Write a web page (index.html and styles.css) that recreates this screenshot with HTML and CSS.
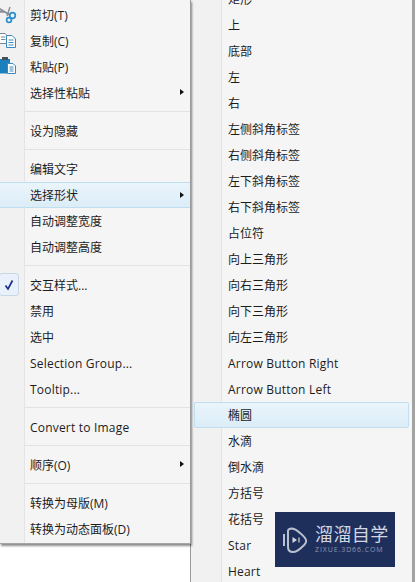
FILE: index.html
```html
<!DOCTYPE html>
<html lang="zh-CN">

<head>
  <meta charset="UTF-8">
  <title>选择形状</title>
  <link rel="stylesheet" href="styles.css">
</head>

<body>
  <div class="desk">
    <ul class="menu menu-main">
      <li class="item">
        <svg class="icon" viewBox="0 0 24 26" width="24" height="26">
          <path d="M-1 6.500 L10 13 M-1 10 L4 9.500" fill="none" stroke="#8a8f96" stroke-width="1.800"/>
          <path d="M10 5 L7 14" fill="none" stroke="#8a8f96" stroke-width="1.500"/>
          <circle cx="12.500" cy="13.500" r="2.800" fill="none" stroke="#2b8fd0" stroke-width="1.700"/>
          <circle cx="9" cy="18" r="2.400" fill="none" stroke="#2b8fd0" stroke-width="1.700"/>
        </svg>
        <span>剪切(T)</span>
      </li>
      <li class="item">
        <svg class="icon" viewBox="0 0 24 26" width="24" height="26">
          <path d="M-1 5.500 H5 L7.500 8 V15.500 H-1 Z" fill="#fff" stroke="#7d8790"/>
          <path d="M1 9 H5.500 M1 11.500 H5.500" stroke="#7d8790"/>
          <path d="M6.500 7.500 H12 L15.500 11 V19.500 H6.500 Z" fill="#fff" stroke="#3d89bd"/>
          <path d="M8.500 12 H13.500 M8.500 14.500 H13.500 M8.500 17 H13.500" stroke="#3d89bd"/>
        </svg>
        <span>复制(C)</span>
      </li>
      <li class="item">
        <svg class="icon" viewBox="0 0 24 26" width="24" height="26">
          <path d="M-1 5 H10 V19.500 H-1 Z" fill="#1b7fbd"/>
          <path d="M2 3 H8 V6 H2 Z" fill="#44505a"/>
          <path d="M7.500 9.500 H13 L15.500 12 V19.500 H7.500 Z" fill="#fff" stroke="#3d89bd"/>
          <path d="M9.500 13 H13.500 M9.500 15 H13.500 M9.500 17 H13.500" stroke="#3d89bd"/>
        </svg>
        <span>粘贴(P)</span>
      </li>
      <li class="item has-sub"><span>选择性粘贴</span></li>
      <li class="sep"></li>
      <li class="item"><span>设为隐藏</span></li>
      <li class="sep"></li>
      <li class="item"><span>编辑文字</span></li>
      <li class="item has-sub current"><span>选择形状</span></li>
      <li class="item"><span>自动调整宽度</span></li>
      <li class="item"><span>自动调整高度</span></li>
      <li class="sep"></li>
      <li class="item">
        <span class="check">
          <svg viewBox="0 0 12 12" width="12" height="12">
            <path d="M2.500 6.500 L5 10 L9.500 1.500" fill="none" stroke="#1d2f8c" stroke-width="1.700"/>
          </svg>
        </span>
        <span>交互样式...</span>
      </li>
      <li class="item"><span>禁用</span></li>
      <li class="item"><span>选中</span></li>
      <li class="item latin"><span>Selection Group...</span></li>
      <li class="item latin"><span>Tooltip...</span></li>
      <li class="sep"></li>
      <li class="item latin"><span>Convert to Image</span></li>
      <li class="sep"></li>
      <li class="item has-sub"><span>顺序(O)</span></li>
      <li class="sep"></li>
      <li class="item"><span>转换为母版(M)</span></li>
      <li class="item"><span>转换为动态面板(D)</span></li>
    </ul>

    <ul class="menu menu-sub">
      <li class="item"><span>矩形</span></li>
      <li class="item"><span>上</span></li>
      <li class="item"><span>底部</span></li>
      <li class="item"><span>左</span></li>
      <li class="item"><span>右</span></li>
      <li class="item"><span>左侧斜角标签</span></li>
      <li class="item"><span>右侧斜角标签</span></li>
      <li class="item"><span>左下斜角标签</span></li>
      <li class="item"><span>右下斜角标签</span></li>
      <li class="item"><span>占位符</span></li>
      <li class="item"><span>向上三角形</span></li>
      <li class="item"><span>向右三角形</span></li>
      <li class="item"><span>向下三角形</span></li>
      <li class="item"><span>向左三角形</span></li>
      <li class="item latin"><span>Arrow Button Right</span></li>
      <li class="item latin"><span>Arrow Button Left</span></li>
      <li class="item current"><span>椭圆</span></li>
      <li class="item"><span>水滴</span></li>
      <li class="item"><span>倒水滴</span></li>
      <li class="item"><span>方括号</span></li>
      <li class="item"><span>花括号</span></li>
      <li class="item latin"><span>Star</span></li>
      <li class="item latin"><span>Heart</span></li>
    </ul>
  </div>

  <div class="watermark">
    <svg viewBox="0 0 26 28" width="26" height="28">
      <path d="M6 5 V21 Q6 26 11 26 Q15 26 20 21 Q25 17 24 14 Q23 11 18 7 Q14 3 10 2.500 Q6 2.500 6 5" fill="none" stroke="#b9c0cf" stroke-width="2"/>
      <path d="M2 8 V20" fill="none" stroke="#b9c0cf" stroke-width="2"/>
      <path d="M10.500 11 L15 14 L10.500 17 Z" fill="#d5d9e2"/>
      <path d="M17 11.500 V16.500" stroke="#d5d9e2" stroke-width="1.200"/>
    </svg>
    <div class="mark-text">
      <span class="mark-name">溜溜自学</span>
      <span class="mark-url">ZIXUE.3D66.COM</span>
    </div>
  </div>
</body>

</html>
```

FILE: styles.css
```css
* {
  box-sizing: border-box;
}

html,
body {
  height: 100%;
}

body {
  margin: 0;
  background: #fff;
  color: #1c1c1c;
  font-family: "Open Sans", "Noto Sans CJK SC", sans-serif;
  font-size: 12px;
  overflow: hidden;
}

ul {
  list-style: none;
  margin: 0;
  padding: 0;
}

.desk {
  display: flex;
  align-items: flex-start;
}

.menu {
  flex: none;
}

.menu-main {
  position: relative;
  z-index: 1;
  width: 191px;
  padding-top: 2px;
  height: 544px;
  background: linear-gradient(to right, #f1f1f1 24px, #e4e4e4 24px 25px, #f5f5f5 25px);
  border-right: 1px solid #9b9b9b;
  border-bottom: 1px solid #a5a5a5;
  box-shadow: 1px 2px 2px rgb(0 0 0 / 45%);
}

.menu-sub {
  width: 225px;
  margin: -14px 0 0 -1px;
  background: linear-gradient(to right, #f1f1f1 30px, #e4e4e4 30px 31px, #f5f5f5 31px);
  border-left: 1px solid #9b9b9b;
  border-right: 3px solid #a3a3a3;
}

.item {
  display: flex;
  align-items: center;
  position: relative;
  height: 26px;
  white-space: nowrap;
}

.latin {
  letter-spacing: 0.2px;
}

.menu-main .item {
  padding-left: 30px;
}

.menu-sub .item {
  padding-left: 37px;
}

.sep {
  height: 12px;
  padding-top: 5px;
}

.sep::after {
  content: "";
  display: block;
  height: 1px;
  margin-left: 25px;
  background: #e2e2e2;
}

.current {
  background: linear-gradient(#eaf4fb, #dcedf8);
  border-top: 1px solid #bfdff0;
  border-bottom: 1px solid #bfdff0;
}

.menu-sub .current {
  margin: 0 3px;
  padding-left: 33px;
  border: 1px solid #bfdff0;
  border-radius: 2px;
}

.has-sub::after {
  content: "";
  position: absolute;
  right: 6px;
  top: 9px;
  border-left: 4px solid #111;
  border-top: 3.5px solid transparent;
  border-bottom: 3.5px solid transparent;
}

.icon {
  position: absolute;
  left: 0;
  top: 0;
}

.check {
  position: absolute;
  left: -1px;
  top: 1px;
  width: 20px;
  height: 23px;
  display: flex;
  align-items: center;
  justify-content: center;
  background: #e9f1fa;
  border: 1px solid #c9d6e6;
  border-radius: 3px;
}

.watermark {
  position: absolute;
  left: 275px;
  top: 512px;
  width: 120px;
  height: 55px;
  display: flex;
  align-items: center;
  gap: 7px;
  padding-left: 7px;
  background: #1f2f5c;
  color: #d3d7e2;
}

.mark-text {
  display: flex;
  flex-direction: column;
  gap: 2px;
}

.mark-name {
  font-size: 18px;
  line-height: 19px;
  letter-spacing: 0.4px;
}

.mark-url {
  font-size: 7px;
  line-height: 8px;
  letter-spacing: 0.9px;
  color: #8f98b0;
}
```
